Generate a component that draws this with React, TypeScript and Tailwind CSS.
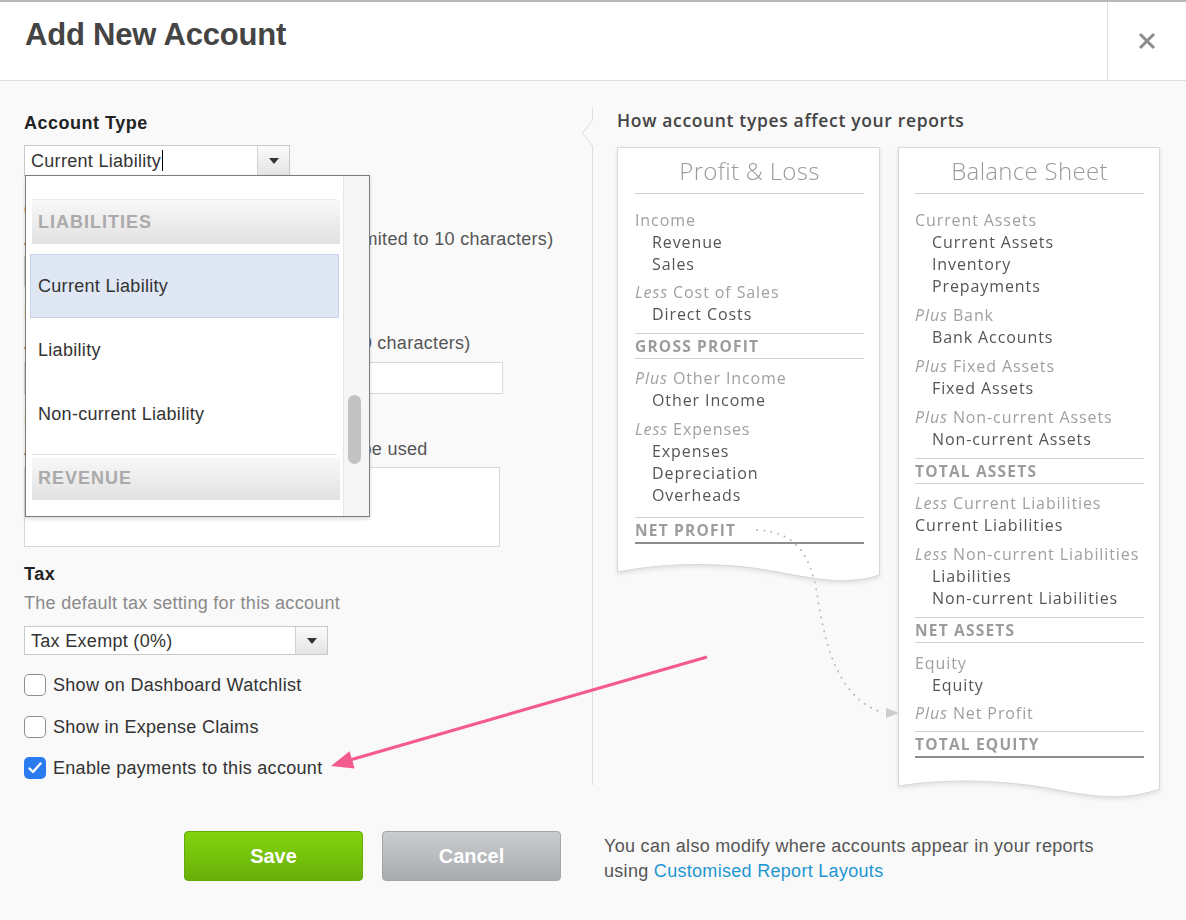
import React from "react";

type SelectProps = { value: string; box: string; caret?: boolean };

function Select({ value, box, caret }: SelectProps) {
  return (
    <div className={`flex bg-white border border-[#c9c9c9] ${box}`}>
      <div className="flex-1 pl-[6px] flex items-center text-[18px] tracking-[0.3px] text-[#333]">
        {value}
        {caret && <span className="ml-px w-px h-[21px] bg-black" />}
      </div>
      <div className="w-[32px] border-l border-l-[#d2d2d2] bg-linear-to-b from-[#fbfbfb] to-[#e4e4e4] flex items-center justify-center">
        <svg width="10" height="6" viewBox="0 0 10 6">
          <path d="M0 0H10L5 6Z" fill="#333" />
        </svg>
      </div>
    </div>
  );
}

function Check({ label, checked, cls }: { label: string; checked?: boolean; cls: string }) {
  return (
    <label className={`flex items-center gap-[7px] h-[22px] text-[#333] ${cls}`}>
      {checked ? (
        <span className="w-[22px] h-[22px] rounded-[5px] bg-[#2a7bef] flex items-center justify-center">
          <svg width="14" height="12" viewBox="0 0 14 12">
            <path d="M1.5 6.5L5 10L12.5 1.5" fill="none" stroke="white" strokeWidth="2.4" strokeLinecap="round" strokeLinejoin="round" />
          </svg>
        </span>
      ) : (
        <span className="w-[22px] h-[22px] rounded-[5px] border-[1.5px] border-[#8e8e93] bg-white" />
      )}
      <span>{label}</span>
    </label>
  );
}

function Label({ pre, text, cls = "", dark }: { pre?: string; text: string; cls?: string; dark?: boolean }) {
  return (
    <div className={`leading-[22px] ${dark ? "text-[#555]" : "text-[#a0a0a0]"} ${cls}`}>
      {pre && <span className="italic">{pre} </span>}
      {text}
    </div>
  );
}

function Item({ text }: { text: string }) {
  return <div className="pl-[17px] leading-[22px] text-[#555]">{text}</div>;
}

function Total({ text, cls, dark }: { text: string; cls: string; dark?: boolean }) {
  return (
    <div className={cls}>
      <div className="h-px bg-[#d2d2d2]" />
      <div className="h-[24px] leading-[24px] text-[15.5px] font-bold tracking-[1.2px] text-[#9c9c9c]">{text}</div>
      <div className={dark ? "h-[2px] bg-[#8c8c8c]" : "h-px bg-[#d2d2d2]"} />
    </div>
  );
}

function Card({
  title,
  outer,
  inner,
  wave,
  children,
}: {
  title: string;
  outer: string;
  inner: string;
  wave: string;
  children: React.ReactNode;
}) {
  return (
    <div className={`${outer} drop-shadow-[0_2px_2px_rgba(0,0,0,0.1)]`}>
      <div className={`bg-white border-x border-t border-[#dadada] ${inner}`}>
        <div className="pt-[8px] text-center text-[24px] leading-[30px] font-light tracking-[0.3px] text-[#9a9a9a]">{title}</div>
        <div className="mt-[7px] h-px bg-[#cfcfcf]" />
        <div className="mt-[15px] text-[16px] tracking-[0.9px]">{children}</div>
      </div>
      <svg className="block w-full h-[26px]" viewBox="0 0 262 26" preserveAspectRatio="none">
        <path d={wave} fill="white" stroke="#d6d6d6" />
      </svg>
    </div>
  );
}

export default function App() {
  return (
    <div className="relative w-[1186px] h-[920px] overflow-hidden bg-[#f9f9f9] font-['Liberation_Sans',Arial,sans-serif] text-[#333]">
      {/* Header */}
      <div className="flex h-[81px] bg-white border-t-2 border-t-[#b8b8b8] border-b border-b-[#dedede]">
        <h1 className="flex-1 pl-[25px] pt-[15px] text-[31px] leading-[36px] font-bold tracking-[-0.2px] text-[#444]">Add New Account</h1>
        <div className="w-[79px] border-l border-l-[#e2e2e2] flex items-center justify-center">
          <svg width="18" height="18" viewBox="0 0 18 18">
            <path d="M2 2L16 16M16 2L2 16" stroke="#8c8c8c" strokeWidth="3" />
          </svg>
        </div>
      </div>

      {/* Body */}
      <div className="flex h-[750px]">
        {/* Form */}
        <div className="w-[592px] pl-[24px] pt-[32px] flex flex-col items-start text-[18px] tracking-[0.3px] leading-[20px]">
          <div className="font-bold tracking-[0.5px] text-[#222]">Account Type</div>
          <Select value="Current Liability" box="mt-[12px] w-[266px] h-[31px]" caret />

          <div className="mt-[24px] font-bold text-[#222]">Code</div>
          <div className="mt-[9px] text-[#555]">A unique code/number for this account (limited to 10 characters)</div>
          <div className="mt-[7px] w-[130px] h-[31px] bg-white border border-[#d0d0d0]" />

          <div className="mt-[16px] font-bold text-[#222]">Name</div>
          <div className="mt-[10px] text-[#555]">A short title for this account (limited to 150 characters)</div>
          <div className="mt-[9px] w-[479px] h-[32px] bg-white border border-[#d8d8d8]" />

          <div className="mt-[16px] font-bold text-[#222]">Description (Optional)</div>
          <div className="mt-[9px] text-[#555]">A description of how this account should be used</div>
          <div className="mt-[8px] w-[476px] h-[80px] bg-white border border-[#d8d8d8]" />

          <div className="mt-[17px] font-bold tracking-[0.5px] text-[#222]">Tax</div>
          <div className="mt-[9px] text-[#8a8a8a]">The default tax setting for this account</div>
          <Select value="Tax Exempt (0%)" box="mt-[13px] w-[304px] h-[29px]" />

          <Check label="Show on Dashboard Watchlist" cls="mt-[19px]" />
          <Check label="Show in Expense Claims" cls="mt-[20px]" />
          <Check label="Enable payments to this account" cls="mt-[19px]" checked />
        </div>

        {/* Divider */}
        <div className="relative w-px mt-[27px] h-[677px] bg-[#dedede]">
          <svg className="absolute left-[-11px] top-[12px]" width="14" height="28" viewBox="0 0 14 28">
            <rect x="10" y="0.5" width="4" height="25" fill="#f9f9f9" />
            <path d="M11.5 0 L1.5 13 L11.5 26" fill="none" stroke="#dedede" />
          </svg>
        </div>

        {/* Reports */}
        <div className="flex-1 pl-[24px] pt-[28px] font-['Open_Sans',sans-serif]">
          <div className="text-[17.5px] leading-[22px] font-semibold tracking-[0.65px] text-[#444]">How account types affect your reports</div>
          <div className="mt-[16px] flex items-start gap-[18px]">
            <Card
              title="Profit & Loss"
              outer="w-[263px]"
              inner="pl-[17px] pr-[15px] pb-[16px]"
              wave="M0.5 0 V12 C 50 2, 110 2, 160 12 S 235 24, 261.5 15 V0"
            >
              <Label text="Income" />
              <Item text="Revenue" />
              <Item text="Sales" />
              <Label pre="Less" text="Cost of Sales" cls="mt-[6px]" />
              <Item text="Direct Costs" />
              <Total text="GROSS PROFIT" cls="mt-[8px]" />
              <Label pre="Plus" text="Other Income" cls="mt-[8px]" />
              <Item text="Other Income" />
              <Label pre="Less" text="Expenses" cls="mt-[7px]" />
              <Item text="Expenses" />
              <Item text="Depreciation" />
              <Item text="Overheads" />
              <Total text="NET PROFIT" cls="mt-[11px]" dark />
            </Card>
            <Card
              title="Balance Sheet"
              outer="w-[262px]"
              inner="pl-[16px] pr-[15px] pb-[18px]"
              wave="M0.5 0 V10 C 50 2, 110 4, 160 14 S 235 22, 261.5 13 V0"
            >
              <Label text="Current Assets" />
              <Item text="Current Assets" />
              <Item text="Inventory" />
              <Item text="Prepayments" />
              <Label pre="Plus" text="Bank" cls="mt-[7px]" />
              <Item text="Bank Accounts" />
              <Label pre="Plus" text="Fixed Assets" cls="mt-[7px]" />
              <Item text="Fixed Assets" />
              <Label pre="Plus" text="Non-current Assets" cls="mt-[7px]" />
              <Item text="Non-current Assets" />
              <Total text="TOTAL ASSETS" cls="mt-[8px]" />
              <Label pre="Less" text="Current Liabilities" cls="mt-[8px]" />
              <Label text="Current Liabilities" dark />
              <Label pre="Less" text="Non-current Liabilities" cls="mt-[7px]" />
              <Item text="Liabilities" />
              <Item text="Non-current Liabilities" />
              <Total text="NET ASSETS" cls="mt-[8px]" />
              <Label text="Equity" cls="mt-[9px]" />
              <Item text="Equity" />
              <Label pre="Plus" text="Net Profit" cls="mt-[6px]" />
              <Total text="TOTAL EQUITY" cls="mt-[7px]" dark />
            </Card>
          </div>
        </div>
      </div>

      {/* Footer */}
      <div className="flex items-start pl-[184px]">
        <button className="w-[179px] h-[50px] rounded-[4px] border border-[#66aa0c] bg-linear-to-b from-[#82d40d] to-[#69b00a] text-white text-[20px] font-bold">
          Save
        </button>
        <button className="ml-[19px] w-[179px] h-[50px] rounded-[4px] border border-[#a3a6aa] bg-linear-to-b from-[#cacccf] to-[#a8abaf] text-white text-[20px] font-bold">
          Cancel
        </button>
        <p className="ml-[43px] mt-[3px] text-[18px] tracking-[0.3px] leading-[25px] text-[#555]">
          You can also modify where accounts appear in your reports
          <br />
          using <span className="text-[#1e96d2]">Customised Report Layouts</span>
        </p>
      </div>

      {/* Account type dropdown (open) */}
      <div className="absolute left-[25px] top-[175px] w-[345px] h-[342px] flex bg-white border border-[#7c7c7c] shadow-[0_2px_4px_rgba(0,0,0,0.15)] text-[18px] tracking-[0.3px]">
        <div className="flex-1 flex flex-col">
          <div className="h-[23px]" />
          <div className="mx-[6px] h-px bg-[#ececec]" />
          <div className="ml-[6px] mr-[3px] h-[44px] pl-[6px] flex items-center bg-linear-to-b from-[#f8f8f8] to-[#e2e2e2] font-bold tracking-[1px] text-[#ababab]">
            LIABILITIES
          </div>
          <div className="mt-[10px] mx-[4px] h-[64px] pl-[7px] flex items-center bg-[#dfe7f4] border border-[#c6d5ec] text-[#333]">
            Current Liability
          </div>
          <div className="h-[64px] pl-[12px] flex items-center text-[#333]">Liability</div>
          <div className="h-[64px] pl-[12px] flex items-center text-[#333]">Non-current Liability</div>
          <div className="mt-[8px] mx-[6px] h-px bg-[#e0e0e0]" />
          <div className="mt-[2px] ml-[6px] mr-[3px] h-[43px] pl-[6px] flex items-center bg-linear-to-b from-[#f8f8f8] to-[#e2e2e2] font-bold tracking-[1px] text-[#ababab]">
            REVENUE
          </div>
        </div>
        <div className="relative w-[26px] bg-[#f6f6f6] border-l border-l-[#e6e6e6]">
          <div className="absolute left-[4px] top-[219px] w-[13px] h-[69px] rounded-full bg-[#c2c2c2]" />
        </div>
      </div>

      {/* Overlay: dotted connector and pink arrow */}
      <svg className="absolute left-0 top-0 pointer-events-none" width="1186" height="920" viewBox="0 0 1186 920">
        <path
          d="M757 530 C 800 532, 812 560, 818 600 C 826 650, 840 700, 884 713"
          fill="none"
          stroke="#bdbdbd"
          strokeWidth="2"
          strokeDasharray="0.1 7"
          strokeLinecap="round"
        />
        <path d="M886 708 L899 713 L886 718 Z" fill="#cdcdcd" />
        <line x1="707" y1="657" x2="350" y2="760" stroke="#f45a8d" strokeWidth="3" />
        <path d="M331 766 L354.6 768.5 L349.6 751.3 Z" fill="#f45a8d" />
      </svg>
    </div>
  );
}
